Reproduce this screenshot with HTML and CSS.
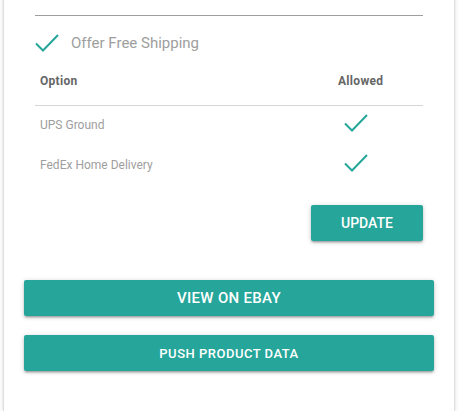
FILE: index.html
```html
<!DOCTYPE html>
<html>
<head>
<meta charset="utf-8">
<link rel="stylesheet" href="styles.css">
</head>
<body>
<div class="card">
  <div class="section">
    <div class="divider"></div>
    <div class="offer">
      <svg class="check" viewBox="0 0 24 18" width="24" height="18"><polyline points="1,9.5 8,16.5 23,1" /></svg>
      <span class="offer-label">Offer Free Shipping</span>
    </div>
    <div class="table">
      <div class="thead">
        <div class="th">Option</div>
        <div class="th col2">Allowed</div>
      </div>
      <div class="tr">
        <div class="td">UPS Ground</div>
        <div class="td col2"><svg class="check tcheck" viewBox="0 0 24 18" width="24" height="18"><polyline points="1,9.5 8,16.5 23,1" /></svg></div>
      </div>
      <div class="tr">
        <div class="td">FedEx Home Delivery</div>
        <div class="td col2"><svg class="check tcheck" viewBox="0 0 24 18" width="24" height="18"><polyline points="1,9.5 8,16.5 23,1" /></svg></div>
      </div>
    </div>
    <div class="actions">
      <button class="btn btn-update">UPDATE</button>
    </div>
  </div>
  <button class="btn btn-block btn-ebay">VIEW ON EBAY</button>
  <button class="btn btn-block btn-push">PUSH PRODUCT DATA</button>
</div>
</body>
</html>
```

FILE: styles.css
```css
html, body {
  margin: 0;
  padding: 0;
  background: #ffffff;
  font-family: Roboto, "Noto Sans", "Liberation Sans", sans-serif;
}

.card {
  box-sizing: border-box;
  width: 450px;
  margin: -20px 0 0 4px;
  padding: 20px 20px 40px 20px;
  background: #ffffff;
  box-shadow: 0 2px 2px 0 rgba(0,0,0,.14), 0 3px 1px -2px rgba(0,0,0,.12), 0 1px 5px 0 rgba(0,0,0,.2);
}

.section {
  padding: 0 11px;
}

.divider {
  margin-top: 15px;
  height: 1px;
  background: #9e9e9e;
}

.offer {
  display: flex;
  align-items: center;
  margin-top: 18px;
  height: 17px;
}

.check {
  display: block;
  flex: none;
}

.check polyline {
  fill: none;
  stroke: #26a69a;
  stroke-width: 2;
  stroke-linecap: butt;
  stroke-linejoin: miter;
}

.offer-label {
  margin-left: 12px;
  font-size: 15px;
  line-height: 18px;
  color: #9e9e9e;
}

.thead, .tr {
  display: grid;
  grid-template-columns: 1fr 90px;
}

.thead {
  padding: 23px 0 17px;
  border-bottom: 1px solid #d6d6d6;
}

.th {
  padding-left: 5px;
  font-size: 12px;
  line-height: 14px;
  font-weight: 700;
  letter-spacing: 0.3px;
  color: #666666;
}

.tr {
  height: 40px;
}

.td {
  padding: 12px 0 0 5px;
  font-size: 12px;
  line-height: 14px;
  color: #9e9e9e;
}

.td.col2 {
  padding-top: 8px;
}

.tcheck {
  margin-left: 6px;
}

.actions {
  display: flex;
  justify-content: flex-end;
  margin-top: 19px;
}

.btn {
  display: block;
  height: 36px;
  border: none;
  border-radius: 2px;
  background: #26a69a;
  color: #ffffff;
  font-family: Roboto, "Noto Sans", "Liberation Sans", sans-serif;
  font-weight: 500;
  text-transform: uppercase;
  padding: 0;
  box-shadow: 0 2px 2px 0 rgba(0,0,0,.14), 0 3px 1px -2px rgba(0,0,0,.12), 0 1px 5px 0 rgba(0,0,0,.2);
}

.btn-update {
  width: 112px;
  font-size: 14px;
}

.btn-block {
  width: 100%;
}

.btn-ebay {
  margin-top: 39px;
  font-size: 15px;
  letter-spacing: 0.3px;
}

.btn-push {
  margin-top: 19px;
  font-size: 13px;
  letter-spacing: 0.5px;
}
```
